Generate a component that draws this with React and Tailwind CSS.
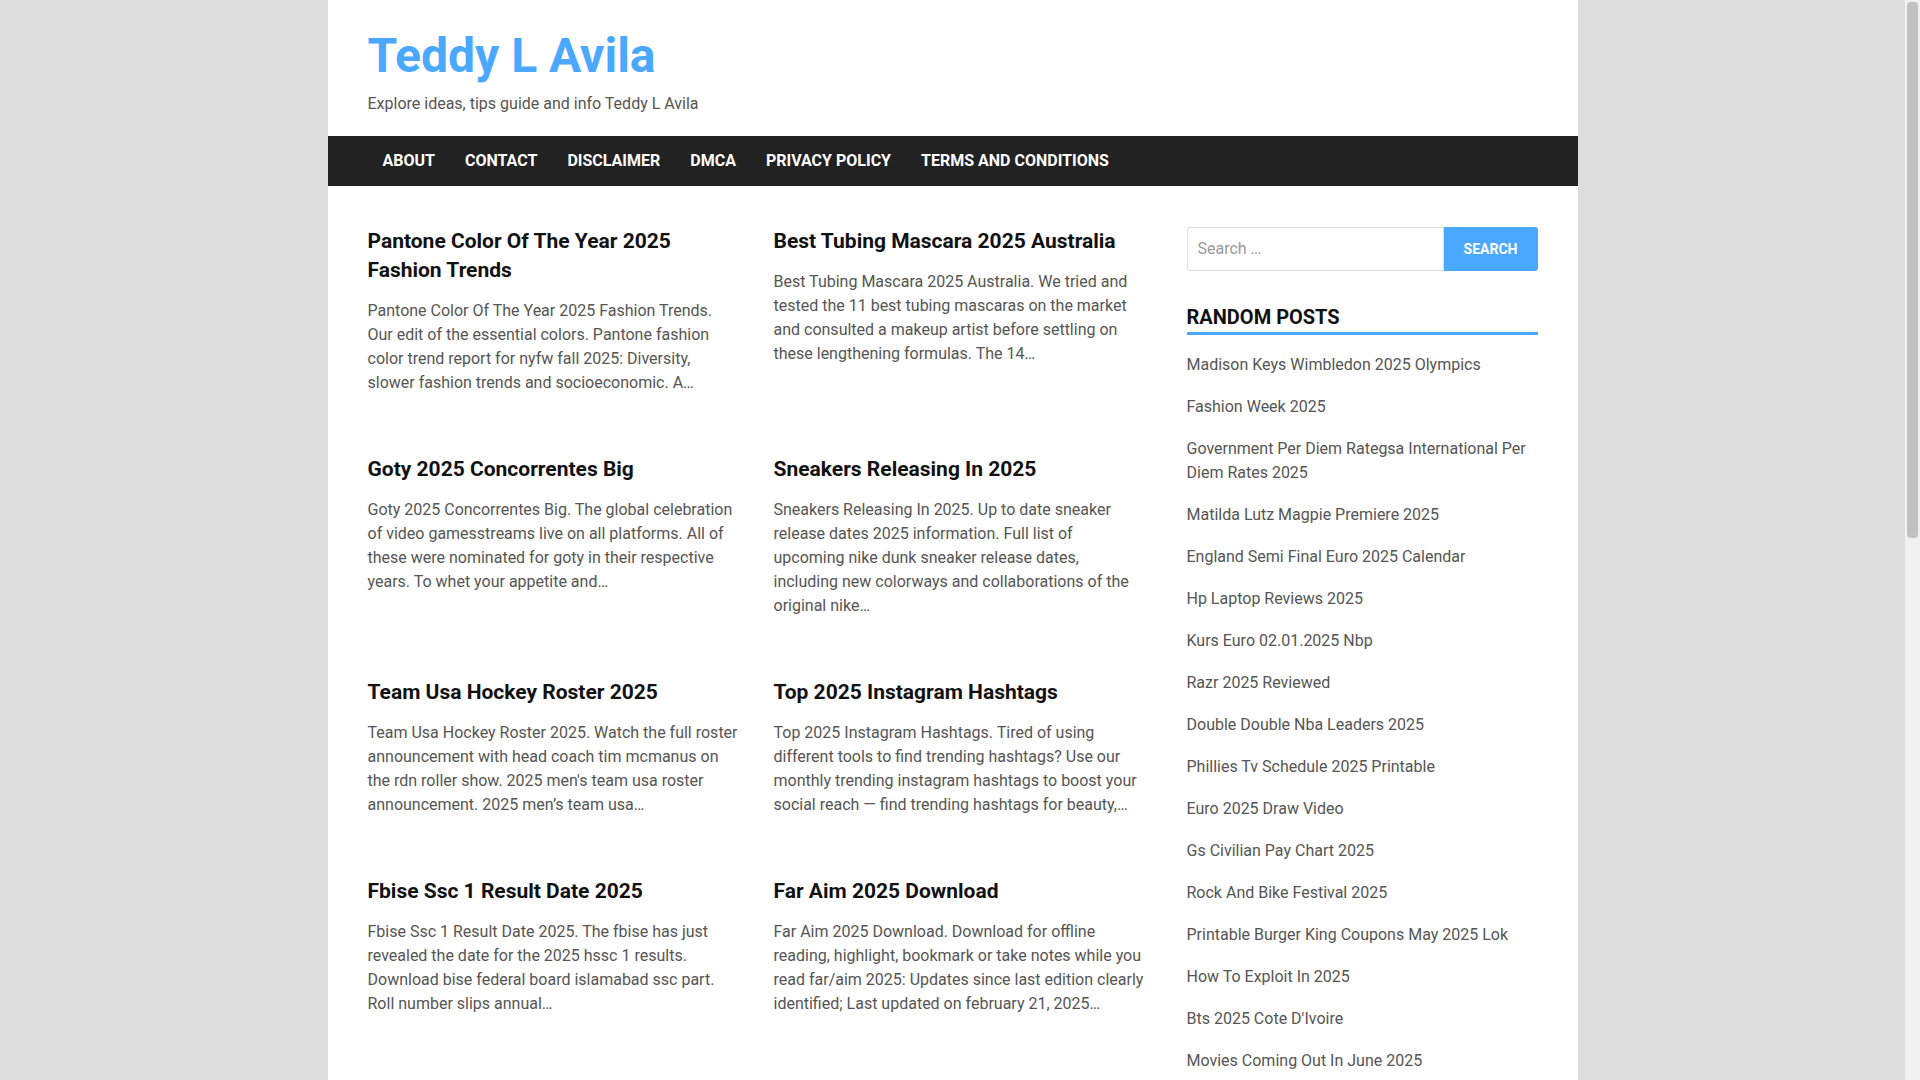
import React from "react";

const posts = [
  {
    title: "Pantone Color Of The Year 2025 Fashion Trends",
    excerpt:
      "Pantone Color Of The Year 2025 Fashion Trends. Our edit of the essential colors. Pantone fashion color trend report for nyfw fall 2025: Diversity, slower fashion trends and socioeconomic. A…",
  },
  {
    title: "Best Tubing Mascara 2025 Australia",
    excerpt:
      "Best Tubing Mascara 2025 Australia. We tried and tested the 11 best tubing mascaras on the market and consulted a makeup artist before settling on these lengthening formulas. The 14…",
  },
  {
    title: "Goty 2025 Concorrentes Big",
    excerpt:
      "Goty 2025 Concorrentes Big. The global celebration of video gamesstreams live on all platforms. All of these were nominated for goty in their respective years. To whet your appetite and…",
  },
  {
    title: "Sneakers Releasing In 2025",
    excerpt:
      "Sneakers Releasing In 2025. Up to date sneaker release dates 2025 information. Full list of upcoming nike dunk sneaker release dates, including new colorways and collaborations of the original nike…",
  },
  {
    title: "Team Usa Hockey Roster 2025",
    excerpt:
      "Team Usa Hockey Roster 2025. Watch the full roster announcement with head coach tim mcmanus on the rdn roller show. 2025 men's team usa roster announcement. 2025 men’s team usa…",
  },
  {
    title: "Top 2025 Instagram Hashtags",
    excerpt:
      "Top 2025 Instagram Hashtags. Tired of using different tools to find trending hashtags? Use our monthly trending instagram hashtags to boost your social reach — find trending hashtags for beauty,…",
  },
  {
    title: "Fbise Ssc 1 Result Date 2025",
    excerpt:
      "Fbise Ssc 1 Result Date 2025. The fbise has just revealed the date for the 2025 hssc 1 results. Download bise federal board islamabad ssc part. Roll number slips annual…",
  },
  {
    title: "Far Aim 2025 Download",
    excerpt:
      "Far Aim 2025 Download. Download for offline reading, highlight, bookmark or take notes while you read far/aim 2025: Updates since last edition clearly identified; Last updated on february 21, 2025…",
  },
];

const random = [
  "Madison Keys Wimbledon 2025 Olympics",
  "Fashion Week 2025",
  "Government Per Diem Rategsa International Per Diem Rates 2025",
  "Matilda Lutz Magpie Premiere 2025",
  "England Semi Final Euro 2025 Calendar",
  "Hp Laptop Reviews 2025",
  "Kurs Euro 02.01.2025 Nbp",
  "Razr 2025 Reviewed",
  "Double Double Nba Leaders 2025",
  "Phillies Tv Schedule 2025 Printable",
  "Euro 2025 Draw Video",
  "Gs Civilian Pay Chart 2025",
  "Rock And Bike Festival 2025",
  "Printable Burger King Coupons May 2025 Lok",
  "How To Exploit In 2025",
  "Bts 2025 Cote D'Ivoire",
  "Movies Coming Out In June 2025",
];

const nav = ["About", "Contact", "Disclaimer", "DMCA", "Privacy Policy", "Terms and Conditions"];

export default function App() {
  return (
    <div className="flex h-screen font-['Roboto','Liberation_Sans',sans-serif]">
      <div className="flex-1 overflow-hidden bg-[#dddddd]">
        <div className="mx-auto w-[1250px] bg-white pb-[120px]">
          <header className="px-10 pt-[27px] pb-[20px]">
            <h1 className="text-[48px] leading-[1.2] font-bold text-[#4aa8ff]">Teddy L Avila</h1>
            <p className="mt-[7px] text-base leading-6 text-[#555555]">
              Explore ideas, tips guide and info Teddy L Avila
            </p>
          </header>
          <nav className="flex h-[50px] items-center bg-[#222222] px-10">
            {nav.map((n) => (
              <a key={n} className="px-[15px] text-base font-bold uppercase text-white">
                {n}
              </a>
            ))}
          </nav>
          <div className="flex px-10 pt-[41px]">
            <main className="grid w-[778px] grid-cols-[372px_372px] content-start gap-x-[34px] gap-y-[60px]">
              {posts.map((p) => (
                <article key={p.title}>
                  <h2 className="mb-[14px] text-[21px] leading-[29px] font-bold text-[#111111]">{p.title}</h2>
                  <p className="text-base leading-6 text-[#555555]">{p.excerpt}</p>
                </article>
              ))}
            </main>
            <aside className="ml-auto w-[351px]">
              <form className="flex h-[44px]">
                <input
                  type="search"
                  placeholder="Search …"
                  className="min-w-0 flex-1 rounded-l-[3px] border border-[#dddddd] px-[10px] text-base text-[#555555] outline-none placeholder:text-[#999999]"
                />
                <button
                  type="button"
                  className="w-[94px] rounded-r-[3px] bg-[#4aa8ff] text-sm font-bold uppercase text-white"
                >
                  Search
                </button>
              </form>
              <h2 className="mt-[34px] border-b-[3px] border-[#4aa8ff] pb-[3px] text-[20px] leading-6 font-bold uppercase text-[#111111]">
                Random Posts
              </h2>
              <ul className="mt-[18px] flex flex-col gap-[18px]">
                {random.map((r) => (
                  <li key={r} className="text-base leading-6 text-[#555555]">
                    {r}
                  </li>
                ))}
              </ul>
            </aside>
          </div>
        </div>
      </div>
      <div className="flex w-[15px] flex-col bg-[#f1f1f1] px-[2px] pt-[2px]">
        <div className="h-[536px] rounded-[4px] bg-[#c1c1c1]" />
      </div>
    </div>
  );
}
